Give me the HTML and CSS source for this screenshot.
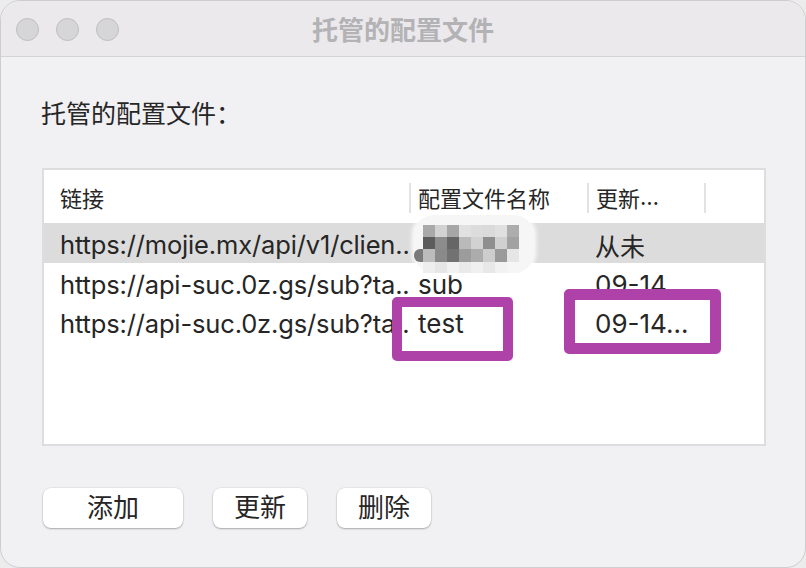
FILE: index.html
```html
<!DOCTYPE html>
<html lang="zh-CN">
<head>
<meta charset="utf-8">
<title>托管的配置文件</title>
<link rel="stylesheet" href="styles.css">
</head>
<body>
<div class="window">
  <header class="titlebar">
    <div class="lights"><span class="light"></span><span class="light"></span><span class="light"></span></div>
    <div class="title">托管的配置文件</div>
    <div></div>
  </header>
  <main class="content">
    <p class="label">托管的配置文件：</p>
    <div class="table">
      <div class="thead">
        <div class="th c1">链接</div>
        <div class="th c2">配置文件名称</div>
        <div class="th c3">更新<span class="latin">…</span></div>
        <div class="th c4"></div>
      </div>
      <div class="tr selected">
        <div class="td c1">https://mojie.mx/api/v1/clien..</div>
        <div class="td c2 blurcell">
          <div class="mosaic">
            <div class="px" style="background:transparent"></div><div class="px" style="background:#a9a9a9"></div><div class="px" style="background:#d2d2d2"></div><div class="px" style="background:#a6a6a6"></div><div class="px" style="background:#e1e1e1"></div><div class="px" style="background:#dcdcdc"></div><div class="px" style="background:#dadada"></div><div class="px" style="background:#e0e0e0"></div><div class="px" style="background:#adadad"></div>
            <div class="px" style="background:transparent"></div><div class="px" style="background:#5c5c5c"></div><div class="px" style="background:#8c8c8c"></div><div class="px" style="background:#666666"></div><div class="px" style="background:#bababa"></div><div class="px" style="background:#d2d2d2"></div><div class="px" style="background:#8e8e8e"></div><div class="px" style="background:#d0d0d0"></div><div class="px" style="background:#a2a2a2"></div>
            <div class="px" style="background:#7a7a7a;border-radius:6px 0 0 6px"></div><div class="px" style="background:#bcbcbc"></div><div class="px" style="background:#8a8a8a"></div><div class="px" style="background:#727272"></div><div class="px" style="background:#9c9c9c"></div><div class="px" style="background:#acacac"></div><div class="px" style="background:#cdcdcd"></div><div class="px" style="background:#9a9a9a"></div><div class="px" style="background:#e6e6e6"></div>
            <div class="px" style="background:transparent"></div><div class="px" style="background:#eeeeee"></div><div class="px" style="background:#e6e6e6"></div><div class="px" style="background:#f2f2f2"></div><div class="px" style="background:#eaeaea"></div><div class="px" style="background:#f0f0f0"></div><div class="px" style="background:#e8e8e8"></div><div class="px" style="background:#f2f2f2"></div><div class="px" style="background:#f6f6f6"></div>
          </div>
        </div>
        <div class="td c3 cjk">从未</div>
        <div class="td c4"></div>
      </div>
      <div class="tr">
        <div class="td c1">https://api-suc.0z.gs/sub?ta..</div>
        <div class="td c2">sub</div>
        <div class="td c3">09-14…</div>
        <div class="td c4"></div>
      </div>
      <div class="tr">
        <div class="td c1">https://api-suc.0z.gs/sub?ta..</div>
        <div class="td c2">test</div>
        <div class="td c3">09-14…</div>
        <div class="td c4"></div>
      </div>
      <div class="mark mark-name"></div>
      <div class="mark mark-date"></div>
    </div>
    <div class="actions">
      <button class="btn wide">添加</button>
      <button class="btn">更新</button>
      <button class="btn">删除</button>
    </div>
  </main>
</div>
</body>
</html>
```

FILE: styles.css
```css
html, body {
  margin: 0;
  padding: 0;
}

body {
  background: #ececec;
  font-family: "Inter", "Noto Sans CJK SC", sans-serif;
  color: #262626;
}

.window {
  width: 806px;
  height: 568px;
  box-sizing: border-box;
  border: 1px solid #cdcccf;
  border-radius: 20px;
  overflow: hidden;
  background: #f1f0f3;
}

.titlebar {
  height: 56px;
  box-sizing: border-box;
  display: grid;
  grid-template-columns: 1fr auto 1fr;
  align-items: center;
  background: #ebe9ec;
  border-bottom: 1px solid #d4d3d6;
}

.lights {
  display: flex;
  gap: 17px;
  padding-left: 15px;
  padding-top: 1px;
}

.light {
  width: 23px;
  height: 23px;
  box-sizing: border-box;
  border-radius: 50%;
  background: #d6d5d8;
  border: 1px solid #bdbcbf;
}

.title {
  font-family: "Noto Sans CJK SC", sans-serif;
  font-size: 26px;
  font-weight: 700;
  color: #b3b2b5;
  line-height: 32px;
}

.content {
  padding: 39px 40px 0 40px;
}

.label {
  margin: 0;
  font-family: "Noto Sans CJK SC", sans-serif;
  font-size: 25px;
  line-height: 32px;
  color: #262626;
}

.table {
  position: relative;
  margin-top: 40px;
  margin-left: 1px;
  width: 724px;
  height: 278px;
  box-sizing: border-box;
  border: 2px solid #dddcdf;
  background: #ffffff;
}

.thead,
.tr {
  display: grid;
  grid-template-columns: 366px 178px 117px 1fr;
}

.thead {
  height: 53px;
}

.th {
  position: relative;
  display: flex;
  align-items: center;
  padding-left: 8px;
  font-family: "Noto Sans CJK SC", sans-serif;
  font-size: 22px;
  color: #262626;
}

.latin {
  font-family: "Inter", sans-serif;
}

.th.c1 {
  padding-left: 16px;
}

.th.c2::before,
.th.c3::before,
.th.c4::before {
  content: "";
  position: absolute;
  left: -1px;
  top: 13px;
  width: 2px;
  height: 30px;
  background: #e2e2e4;
}

.tr {
  height: 39px;
  font-size: 26px;
}

.tr.selected {
  background: #dcdcdc;
  height: 40px;
}

.td {
  white-space: nowrap;
  overflow: hidden;
  padding-left: 8px;
  padding-top: 4px;
  line-height: 36px;
}

.td.c1 {
  padding-left: 16px;
  font-size: 25.5px;
  letter-spacing: -0.15px;
}

.td.c3 {
  padding-left: 7px;
}

.cjk {
  font-family: "Noto Sans CJK SC", sans-serif;
  font-size: 25px;
}

.blurcell {
  position: relative;
  overflow: visible;
}

.mosaic {
  position: absolute;
  left: 4px;
  top: -8px;
  width: 120px;
  height: 58px;
  box-sizing: border-box;
  padding-top: 10px;
  border-radius: 20px;
  background: #f6f6f6;
  box-shadow: 0 0 4px 2px rgba(255, 255, 255, 0.9);
  display: grid;
  grid-template-columns: 9px repeat(8, 12px);
  grid-template-rows: 12px 12px 13px 11px;
  align-content: start;
}

.px {
  width: 100%;
  height: 100%;
}

.mark {
  position: absolute;
  box-sizing: border-box;
  border: 10px solid #ae42a8;
  border-radius: 5px;
}

.mark-name {
  left: 348px;
  top: 127px;
  width: 121px;
  height: 64px;
}

.mark-date {
  left: 520px;
  top: 119px;
  width: 157px;
  height: 65px;
  border-width: 11px;
}

.actions {
  display: flex;
  gap: 30px;
  margin-top: 42px;
  margin-left: 2px;
}

.btn {
  width: 94px;
  height: 40px;
  padding: 0 0 4px 0;
  border: none;
  border-radius: 8px;
  background: #ffffff;
  box-shadow: 0 0 0 0.5px rgba(0, 0, 0, 0.08), 0 1px 2px rgba(0, 0, 0, 0.28);
  font-family: "Noto Sans CJK SC", sans-serif;
  font-size: 26px;
  line-height: 36px;
  color: #262626;
}

.btn.wide {
  width: 140px;
}
```
